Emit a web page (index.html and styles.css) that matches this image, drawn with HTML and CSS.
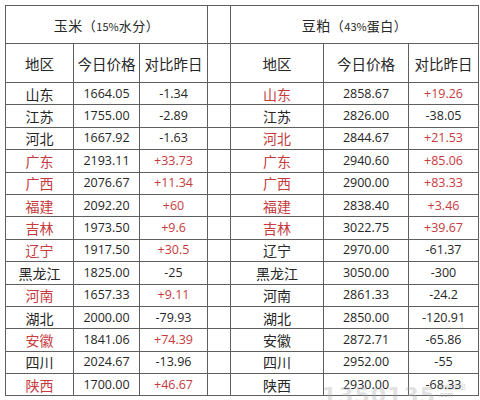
FILE: index.html
```html
<!DOCTYPE html>
<html lang="zh">
<head>
<meta charset="utf-8">
<link rel="stylesheet" href="styles.css">
</head>
<body>
<div class="wrap">
<table class="grid">
<colgroup>
<col class="c1"><col class="c2"><col class="c3"><col class="gap"><col class="c5"><col class="c6"><col class="c7">
</colgroup>
<thead>
<tr class="title">
<th colspan="3">玉米<span class="paren">（<span class="num">15%</span>水分）</span></th>
<td class="sp"></td>
<th colspan="3">豆粕<span class="paren">（<span class="num">43%</span>蛋白）</span></th>
</tr>
<tr class="head">
<th>地区</th><th>今日价格</th><th>对比昨日</th>
<td class="sp"></td>
<th>地区</th><th>今日价格</th><th>对比昨日</th>
</tr>
</thead>
<tbody>
<tr><td>山东</td><td class="n">1664.05</td><td class="n">-1.34</td><td class="sp"></td><td class="r">山东</td><td class="n">2858.67</td><td class="n r">+19.26</td></tr>
<tr><td>江苏</td><td class="n">1755.00</td><td class="n">-2.89</td><td class="sp"></td><td>江苏</td><td class="n">2826.00</td><td class="n">-38.05</td></tr>
<tr><td>河北</td><td class="n">1667.92</td><td class="n">-1.63</td><td class="sp"></td><td class="r">河北</td><td class="n">2844.67</td><td class="n r">+21.53</td></tr>
<tr><td class="r">广东</td><td class="n">2193.11</td><td class="n r">+33.73</td><td class="sp"></td><td class="r">广东</td><td class="n">2940.60</td><td class="n r">+85.06</td></tr>
<tr><td class="r">广西</td><td class="n">2076.67</td><td class="n r">+11.34</td><td class="sp"></td><td class="r">广西</td><td class="n">2900.00</td><td class="n r">+83.33</td></tr>
<tr><td class="r">福建</td><td class="n">2092.20</td><td class="n r">+60</td><td class="sp"></td><td class="r">福建</td><td class="n">2838.40</td><td class="n r">+3.46</td></tr>
<tr><td class="r">吉林</td><td class="n">1973.50</td><td class="n r">+9.6</td><td class="sp"></td><td class="r">吉林</td><td class="n">3022.75</td><td class="n r">+39.67</td></tr>
<tr><td class="r">辽宁</td><td class="n">1917.50</td><td class="n r">+30.5</td><td class="sp"></td><td>辽宁</td><td class="n">2970.00</td><td class="n">-61.37</td></tr>
<tr><td>黑龙江</td><td class="n">1825.00</td><td class="n">-25</td><td class="sp"></td><td>黑龙江</td><td class="n">3050.00</td><td class="n">-300</td></tr>
<tr><td class="r">河南</td><td class="n">1657.33</td><td class="n r">+9.11</td><td class="sp"></td><td>河南</td><td class="n">2861.33</td><td class="n">-24.2</td></tr>
<tr><td>湖北</td><td class="n">2000.00</td><td class="n">-79.93</td><td class="sp"></td><td>湖北</td><td class="n">2850.00</td><td class="n">-120.91</td></tr>
<tr><td class="r">安徽</td><td class="n">1841.06</td><td class="n r">+74.39</td><td class="sp"></td><td>安徽</td><td class="n">2872.71</td><td class="n">-65.86</td></tr>
<tr><td>四川</td><td class="n">2024.67</td><td class="n">-13.96</td><td class="sp"></td><td>四川</td><td class="n">2952.00</td><td class="n">-55</td></tr>
<tr><td class="r">陕西</td><td class="n">1700.00</td><td class="n r">+46.67</td><td class="sp"></td><td>陕西</td><td class="n">2930.00</td><td class="n">-68.33</td></tr>
</tbody>
</table>
<div class="mark"><span class="big">1350135</span><span class="small">农业信息<br>.com</span></div>
</div>
</body>
</html>
```
FILE: styles.css
```css
html, body {
  margin: 0;
  padding: 0;
  background: #ffffff;
}
.wrap {
  position: relative;
  padding: 5px 0 0 5px;
  width: 480px;
  height: 400px;
  box-sizing: border-box;
  overflow: hidden;
}
.grid {
  border-collapse: collapse;
  table-layout: fixed;
  width: 473px;
  font-family: "Noto Sans CJK SC", "Noto Sans", sans-serif;
  color: #262626;
}
.c1 { width: 68px; }
.c2 { width: 66px; }
.c3 { width: 68px; }
.gap { width: 23px; }
.c5 { width: 93px; }
.c6 { width: 85px; }
.c7 { width: 70px; }
.grid th, .grid td {
  border: 1px solid #5f5f5f;
  padding: 0;
  text-align: center;
  font-weight: normal;
  white-space: nowrap;
  overflow: hidden;
}
.title th, .title td {
  height: 37px;
  font-size: 14px;
  letter-spacing: 0.5px;
}
.paren { font-size: 13px; }
.paren .num { font-size: 11px; letter-spacing: 0; }
.head th, .head td {
  height: 38px;
  font-size: 14.5px;
}
tbody td {
  height: 21.4px;
  font-size: 14px;
  line-height: 16px;
}
tbody td.n {
  font-family: "Open Sans", "Noto Sans", sans-serif;
  font-size: 12.5px;
}
.r { color: #c73a3d; }
.mark {
  position: absolute;
  right: 14px;
  bottom: -8px;
  display: flex;
  align-items: flex-end;
  gap: 2px;
  pointer-events: none;
}
.mark .big {
  font-family: "DejaVu Sans", sans-serif;
  font-weight: bold;
  font-size: 22px;
  color: rgba(170, 170, 170, 0.35);
  letter-spacing: 1px;
}
.mark .small {
  font-family: "Liberation Sans", sans-serif;
  font-size: 7px;
  line-height: 8px;
  color: rgba(150, 150, 150, 0.6);
  padding-bottom: 9px;
}
```
